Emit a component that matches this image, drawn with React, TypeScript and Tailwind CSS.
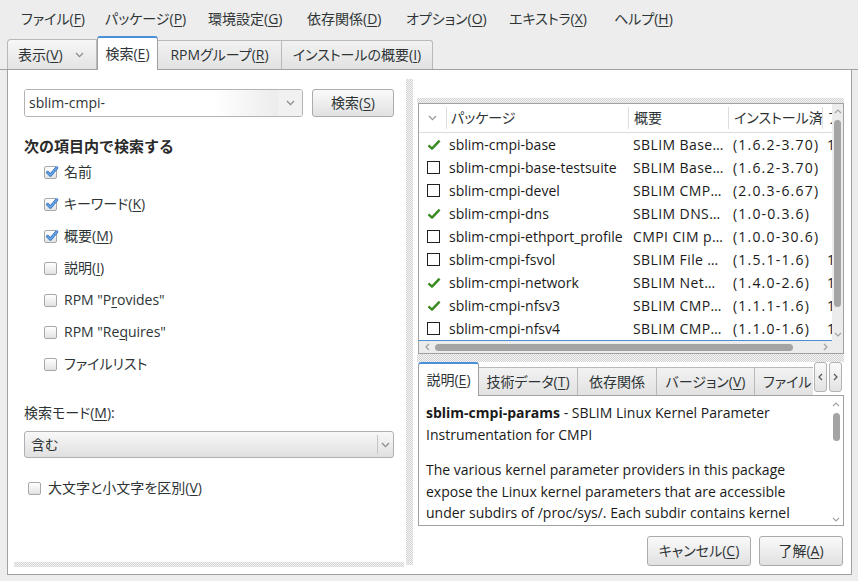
import React from "react";

const U = ({ c }: { c: string }) => (
  <span className="underline underline-offset-[2px] decoration-1">{c}</span>
);

function Chev({ color = "#8b8b8b" }: { color?: string }) {
  return (
    <svg width="9" height="6" viewBox="0 0 9 6" className="shrink-0">
      <polyline points="1,1 4.5,4.6 8,1" fill="none" stroke={color} strokeWidth="1.3" />
    </svg>
  );
}

function ChevUp() {
  return (
    <svg width="8" height="5" viewBox="0 0 8 5">
      <polyline points="1,4 4,1 7,4" fill="none" stroke="#a0a0a0" strokeWidth="1.1" />
    </svg>
  );
}
function ChevDown() {
  return (
    <svg width="8" height="5" viewBox="0 0 8 5">
      <polyline points="1,1 4,4 7,1" fill="none" stroke="#a0a0a0" strokeWidth="1.1" />
    </svg>
  );
}
function ChevL({ color = "#a0a0a0" }: { color?: string }) {
  return (
    <svg width="5" height="8" viewBox="0 0 5 8">
      <polyline points="4,1 1,4 4,7" fill="none" stroke={color} strokeWidth="1.2" />
    </svg>
  );
}
function ChevR({ color = "#a0a0a0" }: { color?: string }) {
  return (
    <svg width="5" height="8" viewBox="0 0 5 8">
      <polyline points="1,1 4,4 1,7" fill="none" stroke={color} strokeWidth="1.2" />
    </svg>
  );
}

function GCheck({ checked }: { checked?: boolean }) {
  return (
    <span className="relative block w-[13px] h-[13px] shrink-0 rounded-[2px] border border-[#a8a8a8] bg-linear-to-b from-white to-[#e2e2e2]">
      {checked && (
        <svg className="absolute left-[0px] top-[-2px]" width="14" height="14" viewBox="0 0 14 14">
          <path d="M2.6 7.4 L5.4 10.2 L11.8 2.8" fill="none" stroke="#2f6db8" strokeWidth="3" strokeLinecap="round" strokeLinejoin="round" />
          <path d="M2.6 7.4 L5.4 10.2 L11.8 2.8" fill="none" stroke="#6aa6e8" strokeWidth="1.6" strokeLinecap="round" strokeLinejoin="round" />
        </svg>
      )}
    </span>
  );
}

function GreenCheck() {
  return (
    <svg width="14" height="12" viewBox="0 0 14 12">
      <path d="M1.5 6.3 L5 9.6 L12.6 1.6" fill="none" stroke="#3a8a22" strokeWidth="2.4" strokeLinejoin="round" />
    </svg>
  );
}

function Box() {
  return <span className="block w-[13px] h-[13px] border-[1.5px] border-[#202020] bg-white" />;
}

const rows: [boolean, string, string, string, boolean][] = [
  [true, "sblim-cmpi-base", "SBLIM Base…", "(1.6.2-3.70)", true],
  [false, "sblim-cmpi-base-testsuite", "SBLIM Base…", "(1.6.2-3.70)", false],
  [false, "sblim-cmpi-devel", "SBLIM CMP…", "(2.0.3-6.67)", false],
  [true, "sblim-cmpi-dns", "SBLIM DNS…", "(1.0-0.3.6)", false],
  [false, "sblim-cmpi-ethport_profile", "CMPI CIM p…", "(1.0.0-30.6)", false],
  [false, "sblim-cmpi-fsvol", "SBLIM File …", "(1.5.1-1.6)", true],
  [true, "sblim-cmpi-network", "SBLIM Net…", "(1.4.0-2.6)", true],
  [true, "sblim-cmpi-nfsv3", "SBLIM CMP…", "(1.1.1-1.6)", true],
  [false, "sblim-cmpi-nfsv4", "SBLIM CMP…", "(1.1.0-1.6)", true],
];

const dotted =
  "bg-[image:repeating-conic-gradient(#d4d4d4_0_25%,#f3f3f3_0_50%)] bg-[length:2px_2px]";

export default function App() {
  return (
    <div className="w-[858px] h-[581px] overflow-hidden bg-[#ededed] text-[#2e3436] text-[14px] leading-[20px] font-['Open_Sans','Noto_Sans_CJK_JP',sans-serif] [font-feature-settings:'palt'] flex flex-col">
      {/* Menu bar */}
      <div className="h-[37px] shrink-0 flex items-center pl-[21px] whitespace-nowrap">
        <div className="w-[84px]">ファイル(<U c="F" />)</div>
        <div className="w-[103px]">パッケージ(<U c="P" />)</div>
        <div className="w-[99px]">環境設定(<U c="G" />)</div>
        <div className="w-[99px]">依存関係(<U c="D" />)</div>
        <div className="w-[103px]">オプション(<U c="O" />)</div>
        <div className="w-[105px]">エキストラ(<U c="X" />)</div>
        <div>ヘルプ(<U c="H" />)</div>
      </div>

      {/* Top tab row */}
      <div className="h-[33px] shrink-0 flex items-end pl-[7px] border-b border-[#a1a1a1] whitespace-nowrap">
        <div className="w-[90px] h-[30px] flex items-center justify-between pl-[10px] pr-[12px] border border-b-0 border-[#b9b9b9] rounded-tl-[4px] bg-linear-to-b from-[#f7f7f7] to-[#e3e3e3]">
          <span>表示(<U c="V" />)</span>
          <Chev />
        </div>
        <div className="relative z-10 w-[61px] h-[34px] -mb-px flex items-center justify-center bg-white border-x border-[#a1a1a1] border-t-2 border-t-[#4a90d9] rounded-t-[3px]">
          検索(<U c="E" />)
        </div>
        <div className="w-[124px] h-[29px] flex items-center justify-center border-t border-r border-[#b9b9b9] bg-linear-to-b from-[#f2f2f2] to-[#e2e2e2]">
          RPMグループ(<U c="R" />)
        </div>
        <div className="w-[151px] h-[29px] flex items-center justify-center border-t border-r border-[#b9b9b9] rounded-tr-[3px] bg-linear-to-b from-[#f2f2f2] to-[#e2e2e2]">
          インストールの概要(<U c="I" />)
        </div>
      </div>

      {/* Main panel */}
      <div className="ml-[7px] w-[845px] h-[505px] shrink-0 bg-white border-x border-b border-[#a1a1a1] flex">
        {/* Left pane */}
        <div className="w-[398px] flex flex-col">
          <div className="pt-[19px] pl-[16px] pr-[11px] flex flex-col">
            <div className="flex gap-[9px] h-[28px]">
              <div className="w-[279px] h-[28px] flex border border-[#b3b3b3] rounded-[3px] overflow-hidden">
                <div className="flex-1 flex items-center pl-[4px] bg-linear-to-r from-white from-[75%] to-[#ececec]">sblim-cmpi-</div>
                <div className="w-[24px] flex items-center justify-center bg-[#f1f1f1]">
                  <Chev />
                </div>
              </div>
              <div className="w-[82px] h-[28px] flex items-center justify-center border border-[#ababab] rounded-[3px] bg-linear-to-b from-[#fafafa] to-[#e1e1e1]">
                検索(<U c="S" />)
              </div>
            </div>

            <div className="mt-[19px] h-[20px] font-bold text-[15px] [font-feature-settings:normal] text-[#2a2a2a]">
              次の項目内で検索する
            </div>

            <div className="pl-[20px] flex flex-col">
              {[
                [true, <>名前</>],
                [true, <>キーワード(<U c="K" />)</>],
                [true, <>概要(<U c="M" />)</>],
                [false, <>説明(<U c="I" />)</>],
                [false, <>RPM "P<U c="r" />ovides"</>],
                [false, <>RPM "Re<U c="q" />uires"</>],
                [false, <>ファイルリスト</>],
              ].map(([c, label], i) => (
                <div key={i} className="h-[32px] flex items-center gap-[7px]">
                  <GCheck checked={c as boolean} />
                  <span>{label as React.ReactNode}</span>
                </div>
              ))}
            </div>

            <div className="mt-[23px] h-[20px]">
              検索モード(<U c="M" />):
            </div>
            <div className="mt-[8px] w-[370px] h-[27px] flex items-center border border-[#b0b0b0] rounded-[3px] bg-linear-to-b from-[#f8f8f8] to-[#e0e0e0]">
              <span className="flex-1 pl-[6px]">含む</span>
              <span className="w-px h-[19px] bg-[#c4c4c4]" />
              <span className="w-[15px] flex justify-center">
                <Chev />
              </span>
            </div>

            <div className="mt-[20px] h-[20px] pl-[4px] flex items-center gap-[7px]">
              <GCheck />
              <span>大文字と小文字を区別(<U c="V" />)</span>
            </div>
          </div>
          <div className={`mt-auto mb-[7px] ml-[6px] w-[390px] h-[5px] ${dotted}`} />
        </div>

        {/* Pane separator */}
        <div className={`w-[7px] mt-[9px] mb-[9px] ${dotted}`} />

        {/* Right pane */}
        <div className="w-[438px] pl-[5px] pr-[7px] flex flex-col">
          <div className={`mt-[28px] h-[5px] -ml-px ${dotted}`} />

          {/* Package table */}
          <div className="h-[251px] border border-[#a1a1a1] flex flex-col bg-white">
            <div className="flex h-[237px]">
              <div className="w-[413px] border-b border-[#4a90d9] overflow-hidden">
                {/* header */}
                <div className="h-[29px] flex items-center border-b border-[#dcdcdc] whitespace-nowrap">
                  <div className="w-[27px] flex justify-center">
                    <Chev color="#9a9a9a" />
                  </div>
                  <div className="w-[182px] h-[22px] flex items-center pl-[4px] border-l border-[#dedede]">パッケージ</div>
                  <div className="w-[100px] h-[22px] flex items-center pl-[5px] border-l border-[#dedede]">概要</div>
                  <div className="w-[94px] h-[22px] flex items-center pl-[5px] border-l border-[#dedede] overflow-hidden">インストール済</div>
                  <div className="w-[10px] h-[22px] flex items-center pl-[5px] border-l border-[#dedede] overflow-hidden">アーキ</div>
                </div>
                {rows.map(([inst, name, sum, ver, frag], i) => (
                  <div key={i} className="h-[23px] flex items-center whitespace-nowrap text-[#1a1a1a]">
                    <div className="w-[27px] flex justify-center pl-[2px]">{inst ? <GreenCheck /> : <Box />}</div>
                    <div className="w-[182px] pl-[3px] overflow-hidden">{name}</div>
                    <div className="w-[100px] pl-[5px] overflow-hidden tracking-[0.4px]">{sum}</div>
                    <div className="w-[94px] pl-[5px] overflow-hidden tracking-[1.2px]">{ver}</div>
                    <div className="w-[10px] pl-[5px] overflow-hidden">{frag ? "1" : ""}</div>
                  </div>
                ))}
              </div>
              {/* vertical scrollbar */}
              <div className="w-[11px] bg-[#ececec] flex flex-col items-center">
                <div className="h-[14px] flex items-center">
                  <ChevUp />
                </div>
                <div className="mt-[2px] w-[7px] h-[187px] rounded-full bg-[#a4a4a4]" />
                <div className="mt-auto mb-[4px]">
                  <ChevDown />
                </div>
              </div>
            </div>
            {/* horizontal scrollbar */}
            <div className="h-[12px] bg-[#ececec] flex items-center">
              <div className="w-[16px] flex justify-center">
                <ChevL />
              </div>
              <div className="w-[358px] h-[7px] rounded-full bg-[#a4a4a4]" />
              <div className="ml-[30px]">
                <ChevR />
              </div>
            </div>
          </div>

          <div className={`h-[8px] -ml-px ${dotted}`} />

          {/* Notebook tabs */}
          <div className="h-[33px] flex items-end whitespace-nowrap">
            <div className="relative z-10 w-[61px] h-[34px] -mb-px flex items-center justify-center bg-white border-x border-[#a1a1a1] border-t-2 border-t-[#4a90d9] rounded-t-[3px]">
              説明(<U c="E" />)
            </div>
            <div className="w-[99px] h-[28px] flex items-center justify-center border-t border-r border-[#b9b9b9] bg-linear-to-b from-[#f2f2f2] to-[#e2e2e2]">
              技術データ(<U c="T" />)
            </div>
            <div className="w-[79px] h-[28px] flex items-center justify-center border-t border-r border-[#b9b9b9] bg-linear-to-b from-[#f2f2f2] to-[#e2e2e2]">
              依存関係
            </div>
            <div className="w-[98px] h-[28px] flex items-center justify-center border-t border-r border-[#b9b9b9] bg-linear-to-b from-[#f2f2f2] to-[#e2e2e2]">
              バージョン(<U c="V" />)
            </div>
            <div className="w-[58px] h-[28px] flex items-center pl-[8px] overflow-hidden border-t border-[#b9b9b9] bg-linear-to-b from-[#f2f2f2] to-[#e2e2e2]">
              ファイル
            </div>
            <div className="self-start mt-0 ml-px w-[13px] h-[30px] flex items-center justify-center border border-[#b3b3b3] rounded-[3px] bg-linear-to-b from-[#fafafa] to-[#e2e2e2]">
              <ChevL color="#555" />
            </div>
            <div className="self-start ml-[2px] w-[13px] h-[30px] flex items-center justify-center border border-[#b3b3b3] rounded-[3px] bg-linear-to-b from-[#fafafa] to-[#e2e2e2]">
              <ChevR color="#555" />
            </div>
          </div>

          {/* Description */}
          <div className="h-[131px] border border-[#a1a1a1] flex overflow-hidden bg-white text-[#1a1a1a]">
            <div className="flex-1 pl-[7px] pt-[6px] leading-[22px] whitespace-nowrap">
              <div>
                <span className="font-bold">sblim-cmpi-params</span> - SBLIM Linux Kernel Parameter
                <br />
                Instrumentation for CMPI
              </div>
              <div className="mt-[13px] leading-[21.5px]">
                The various kernel parameter providers in this package
                <br />
                expose the Linux kernel parameters that are accessible
                <br />
                under subdirs of /proc/sys/. Each subdir contains kernel
              </div>
            </div>
            <div className="w-[12px] mr-[1px] flex flex-col items-center">
              <div className="h-[14px] mt-[1px] flex items-center">
                <ChevUp />
              </div>
              <div className="mt-[2px] w-[7px] h-[28px] rounded-full bg-[#a4a4a4]" />
              <div className="mt-auto mb-[3px]">
                <ChevDown />
              </div>
            </div>
          </div>

          {/* Buttons */}
          <div className="mt-[10px] h-[30px] flex justify-end gap-[8px] pr-[1px] whitespace-nowrap">
            <div className="w-[104px] h-[30px] flex items-center justify-center border border-[#ababab] rounded-[3px] bg-linear-to-b from-[#fafafa] to-[#e1e1e1]">
              キャンセル(<U c="C" />)
            </div>
            <div className="w-[84px] h-[30px] flex items-center justify-center border border-[#ababab] rounded-[3px] bg-linear-to-b from-[#fafafa] to-[#e1e1e1]">
              了解(<U c="A" />)
            </div>
          </div>
        </div>
      </div>
    </div>
  );
}
